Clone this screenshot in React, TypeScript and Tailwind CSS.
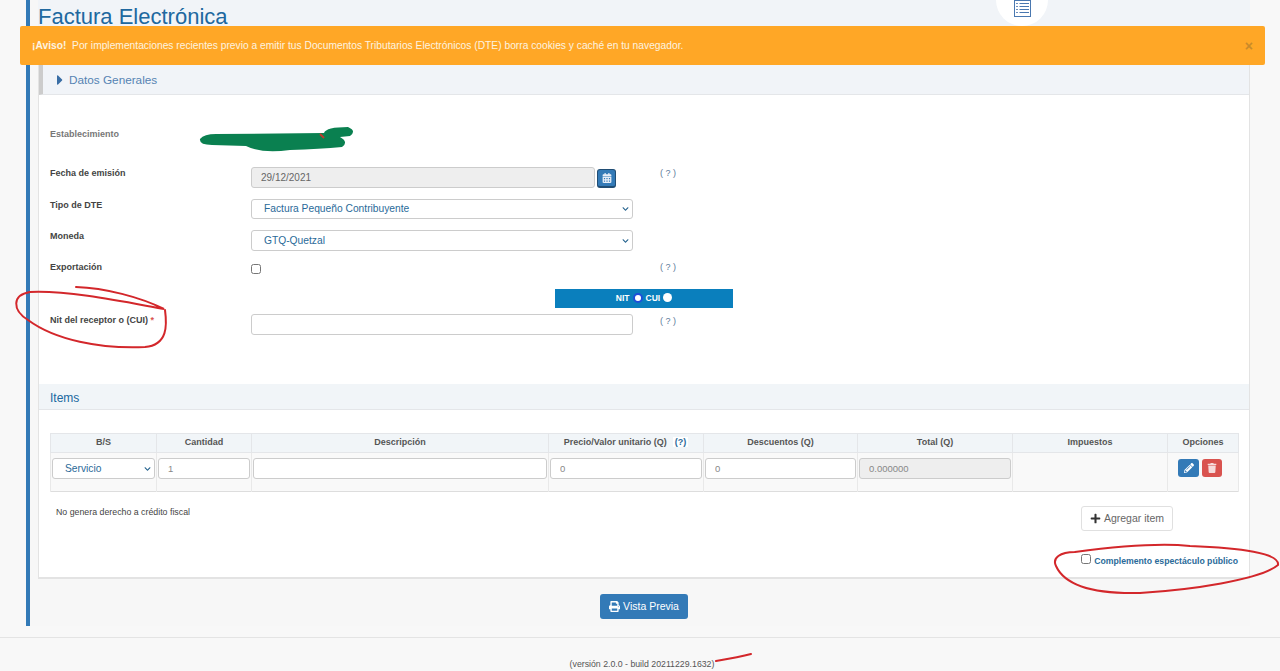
import { FaCalendarAlt, FaCaretRight, FaChevronDown, FaPencilAlt, FaPlus, FaPrint, FaTrash } from "react-icons/fa";

const labelClass = "w-[201px] shrink-0 text-[9px] font-bold text-[#444]";
const inputClass = "h-[21px] w-[382px] rounded-[3px] border border-[#ccc] bg-white px-3 text-[10px] text-[#2a6a99]";
const help = "text-[9px] text-[#5b7a9a]";
const cellInput = "block h-[21px] w-full rounded-[3px] border border-[#ccc] px-[9px] text-[9.5px] text-[#888]";
const cell = "border-x border-[#e9e9e9] px-px pt-[5px]";

const columns = [
  { title: "B/S", width: 106 },
  { title: "Cantidad", width: 95 },
  { title: "Descripción", width: 297 },
  { title: "Precio/Valor unitario (Q)", width: 155 },
  { title: "Descuentos (Q)", width: 154 },
  { title: "Total (Q)", width: 155 },
  { title: "Impuestos", width: 155 },
  { title: "Opciones", width: 71 },
];

const Select = ({ value, className }: { value: string; className: string }) => (
  <div className={`relative ${className}`}>
    <select className="block h-full w-full appearance-none rounded-[3px] border border-[#ccc] bg-white pl-3 text-[10.25px] text-[#2a6a99]">
      <option>{value}</option>
    </select>
    <FaChevronDown className="pointer-events-none absolute right-[4px] top-1/2 h-[7px] w-[7px] -translate-y-1/2 text-[#1f5f8b]" />
  </div>
);

const App = () => {
  return (
    <div className="relative h-[671px] w-[1280px] overflow-hidden bg-[#f8f8f8] font-['Liberation_Sans',Arial,sans-serif]">
      <main className="ml-[26px] flex h-[626px] w-[1224px] flex-col border-l-4 border-[#337ab7] bg-[#f7f7f7] pl-2">
        {/* title strip */}
        <div className="relative h-[65px] shrink-0 bg-[#f1f4f8]">
          <h1 className="mt-[4px] text-[22px] leading-[26px] text-[#20689f]">Factura Electrónica</h1>
          <div className="absolute left-[958px] top-[-26px] flex h-[52px] w-[52px] items-end justify-center rounded-full bg-white pb-[9px]">
            <svg width="17" height="17" viewBox="0 0 17 17" fill="none">
              <rect x="0.5" y="0.5" width="16" height="16" fill="#fff" stroke="#4a78b0" />
              <path d="M2 3.5h2M2 6.5h2M2 9.5h2M2 12.5h2" stroke="#6d8fbd" />
              <path d="M5.5 3.5H15M5.5 6.5H15M5.5 9.5H15M5.5 12.5H15" stroke="#4a78b0" />
            </svg>
          </div>
        </div>

        <section className="h-[514px] shrink-0 border-x border-b-2 border-[#e3e3e3] bg-white">
          <div className="flex h-[30px] items-center gap-[6px] border-b border-[#e4e6e9] border-l-[4px] border-l-[#ccc] bg-[#f1f4f8] pl-[14px]">
            <FaCaretRight className="h-4 w-[6px] text-[#3a6ea5]" />
            <span className="text-[11.75px] text-[#5583b3]">Datos Generales</span>
          </div>

          <div className="h-[289px] pl-[11px] pt-[34px]">
            <div className="flex h-[12px] items-center">
              <span className={`${labelClass} text-[#777]`}>Establecimiento</span>
            </div>

            <div className="mt-[26px] flex h-[21px] items-start">
              <span className={labelClass}>Fecha de emisión</span>
              <input
                readOnly
                value="29/12/2021"
                className="h-[21px] w-[344px] rounded-[3px] border border-[#ccc] bg-[#eee] px-[9px] text-[10px] text-[#666]"
              />
              <button className="ml-[2px] mt-[2px] flex h-[19px] w-[19px] items-center justify-center rounded-[3px] border border-b-2 border-[#204d74] bg-[#337ab7]">
                <FaCalendarAlt className="h-[10px] w-[10px] text-[#e8eef8]" />
              </button>
              <span className={`${help} ml-[44px]`}>( ? )</span>
            </div>

            <div className="mt-[11px] flex h-[20px] items-start">
              <span className={labelClass}>Tipo de DTE</span>
              <Select value="Factura Pequeño Contribuyente" className="h-[20px] w-[382px]" />
            </div>

            <div className="mt-[11px] flex h-[21px] items-start">
              <span className={labelClass}>Moneda</span>
              <Select value="GTQ-Quetzal" className="h-[21px] w-[382px]" />
            </div>

            <div className="mt-[11px] flex h-[14px] items-start">
              <span className={`${labelClass} -mt-px`}>Exportación</span>
              <input type="checkbox" className="mt-[2px] h-[10px] w-[10px]" />
              <span className={`${help} -mt-px ml-[399px]`}>( ? )</span>
            </div>

            <div className="ml-[505px] mt-[13px] flex h-[19px] w-[178px] items-center justify-center gap-[3px] bg-[#0a7fbd] text-[8.5px] font-bold text-white">
              <span>NIT</span>
              <span className="mb-[2px] h-[10px] w-[10px] rounded-full border-2 border-[#1d4ed8] bg-white" />
              <span>CUI</span>
              <span className="mb-[2px] h-[9px] w-[9px] rounded-full bg-white" />
            </div>

            <div className="mt-[6px] flex h-[21px] items-start">
              <span className={labelClass}>
                Nit del receptor o (CUI) <span className="text-[#d9534f]">*</span>
              </span>
              <input className={inputClass} />
              <span className={`${help} ml-[27px] mt-px`}>( ? )</span>
            </div>
          </div>

          <div className="flex h-[26px] items-center border-b border-[#e4e6e9] bg-[#f1f5f8] pl-[11px] pt-[2px]">
            <span className="text-[12px] text-[#20689f]">Items</span>
          </div>

          <div className="ml-[11px] mt-[23px] w-[1188px]">
            <table className="w-[1188px] table-fixed border-collapse">
              <thead>
                <tr className="h-[19px] bg-[#f1f5f8]">
                  {columns.map((col) => (
                    <th
                      key={col.title}
                      style={{ width: col.width }}
                      className="border border-[#e4e6e9] p-0 text-center text-[9px] font-bold text-[#555]"
                    >
                      {col.title}
                      {col.title.startsWith("Precio") && (
                        <span className="ml-[6px] bg-white px-[2px] text-[#2a6a99]">(?)</span>
                      )}
                    </th>
                  ))}
                </tr>
              </thead>
              <tbody>
                <tr className="h-[39px] border-b border-[#ddd] bg-[#f9f9f9] align-top">
                  <td className={cell}>
                    <Select value="Servicio" className="h-[21px] w-full" />
                  </td>
                  <td className={cell}>
                    <input readOnly value="1" className={`${cellInput} bg-white`} />
                  </td>
                  <td className={cell}>
                    <input className={`${cellInput} bg-white`} />
                  </td>
                  <td className={cell}>
                    <input readOnly value="0" className={`${cellInput} bg-white`} />
                  </td>
                  <td className={cell}>
                    <input readOnly value="0" className={`${cellInput} bg-white`} />
                  </td>
                  <td className={cell}>
                    <input readOnly value="0.000000" className={`${cellInput} bg-[#eee]`} />
                  </td>
                  <td className="border-x border-[#e9e9e9]" />
                  <td className="border-x border-[#e9e9e9] pl-[10px] pt-[6px]">
                    <div className="flex gap-[3px]">
                      <button className="flex h-[18px] w-[21px] items-center justify-center rounded-[3px] bg-[#337ab7]">
                        <FaPencilAlt className="h-[10px] w-[10px] text-white" />
                      </button>
                      <button className="flex h-[18px] w-[20px] items-center justify-center rounded-[3px] bg-[#d9534f]">
                        <FaTrash className="h-[10px] w-[10px] text-[#f6dcdc]" />
                      </button>
                    </div>
                  </td>
                </tr>
              </tbody>
            </table>

            <div className="flex items-start justify-between">
              <p className="ml-[6px] mt-[14px] text-[8.8px] text-[#444]">No genera derecho a crédito fiscal</p>
              <div className="flex flex-col items-end">
                <button className="mr-[65px] mt-[14px] flex h-[25px] w-[92px] items-center justify-center gap-[3px] rounded-[3px] border border-[#e0e0e0] bg-white text-[10.5px] text-[#666]">
                  <FaPlus className="h-[11px] w-[11px] text-[#333]" />
                  Agregar item
                </button>
                <label className="mt-[24px] flex items-start gap-[3px] text-[8.7px] font-bold text-[#2a6a99]">
                  <input type="checkbox" className="-mt-[1px] h-[10px] w-[10px]" />
                  Complemento espectáculo público
                </label>
              </div>
            </div>
          </div>
        </section>

        <div className="flex flex-1 justify-center pt-[15px]">
          <button className="flex h-[25px] w-[88px] items-center justify-center gap-[3px] rounded-[3px] bg-[#337ab7] text-[10.5px] text-white">
            <FaPrint className="h-[11px] w-[11px]" />
            Vista Previa
          </button>
        </div>
      </main>

      <footer className="mt-[11px] h-[34px] border-t border-[#e4e4e4] pl-[4px] pt-[20px] text-center text-[8.75px] text-[#555]">
        (versión 2.0.0 - build 20211229.1632)
      </footer>

      {/* notice over the page */}
      <div className="absolute left-5 top-[26px] flex h-[39px] w-[1245px] items-center justify-between rounded-[2px] bg-[#ffa726] pl-3 pr-[12px] text-[10.25px] text-[#fdf3e0]">
        <p>
          <b>¡Aviso!</b>&nbsp; Por implementaciones recientes previo a emitir tus Documentos Tributarios Electrónicos (DTE) borra cookies y caché en tu navegador.
        </p>
        <span className="text-[14px] font-bold leading-none text-[#c98a2a]">×</span>
      </div>

      {/* marks drawn on the screenshot */}
      <svg className="pointer-events-none absolute left-0 top-0" width="1280" height="671" fill="none">
        <path
          d="M200 139 Q204 134 216 134 L324 133 Q326 127 348 127 Q357 131 350 136 L340 137 Q349 142 342 147 Q320 149 290 150 Q262 154 246 146 L212 145 Q199 145 200 139Z"
          fill="#0a8050"
        />
        <path d="M320 134 L324 138" stroke="#c0392b" strokeWidth="2" />
        <g stroke="#d3272b" strokeWidth="2" strokeLinecap="round">
          <path d="M76 287 C105 288 140 297 164 309 C130 303 70 290 30 292 C12 295 12 310 28 320 C55 340 100 349 145 347 C168 345 167 325 165 310" />
          <path d="M1075 552 C1060 552 1052 558 1056 566 C1066 588 1100 594 1140 593 C1190 590 1260 580 1278 565 C1280 553 1240 548 1190 546 C1160 543 1120 546 1075 552" />
          <path d="M716 661 C728 659 740 657 751 654" />
        </g>
      </svg>
    </div>
  );
};

export default App;
